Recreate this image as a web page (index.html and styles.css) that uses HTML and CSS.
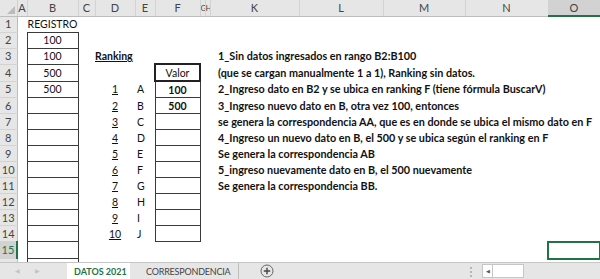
FILE: index.html
```html
<!DOCTYPE html>
<html lang="es">
<head>
  <meta charset="UTF-8">
  <meta name="viewport" content="width=device-width, initial-scale=1.0">
  <title>DATOS 2021</title>
  <link rel="stylesheet" href="styles.css">
</head>
<body>
  <div class="sheet-wrap">
  <table class="sheet">
    <colgroup>
      <col class="w-rh"><col class="w-a"><col class="w-b"><col class="w-c"><col class="w-d"><col class="w-e">
      <col class="w-f"><col class="w-g"><col class="w-h"><col class="w-k"><col class="w-l"><col class="w-m">
      <col class="w-n"><col class="w-o">
    </colgroup>
    <thead>
      <tr>
        <th class="corner"></th>
        <th class="col-head">A</th><th class="col-head">B</th><th class="col-head">C</th><th class="col-head">D</th>
        <th class="col-head">E</th><th class="col-head">F</th><th class="col-head narrow">G</th><th class="col-head narrow">H</th>
        <th class="col-head">K</th><th class="col-head">L</th><th class="col-head">M</th><th class="col-head">N</th>
        <th class="col-head current">O</th>
      </tr>
    </thead>
    <tbody>
      <tr>
        <th class="row-head">1</th><td></td><td class="center">REGISTRO</td><td></td><td></td><td></td><td></td><td></td><td></td>
        <td colspan="4"></td><td></td>
      </tr>
      <tr>
        <th class="row-head">2</th><td></td><td class="box center">100</td><td></td><td></td><td></td><td></td><td></td><td></td>
        <td colspan="4"></td><td></td>
      </tr>
      <tr>
        <th class="row-head">3</th><td></td><td class="box center">100</td><td></td><td class="title">Ranking</td><td></td><td></td><td></td><td></td>
        <td colspan="4" class="note">1_Sin datos ingresados en rango B2:B100</td><td></td>
      </tr>
      <tr>
        <th class="row-head">4</th><td></td><td class="box center">500</td><td></td><td></td><td></td><td class="box-head center">Valor</td><td></td><td></td>
        <td colspan="4" class="note">(que se cargan manualmente 1 a 1), Ranking sin datos.</td><td></td>
      </tr>
      <tr>
        <th class="row-head">5</th><td></td><td class="box center">500</td><td></td><td class="rank">1</td><td class="letter">A</td><td class="box center strong">100</td><td></td><td></td>
        <td colspan="4" class="note">2_Ingreso dato en B2 y se ubica en ranking F (tiene fórmula BuscarV)</td><td></td>
      </tr>
      <tr>
        <th class="row-head">6</th><td></td><td class="box"></td><td></td><td class="rank">2</td><td class="letter">B</td><td class="box center strong">500</td><td></td><td></td>
        <td colspan="4" class="note">3_Ingreso nuevo dato en B, otra vez 100, entonces</td><td></td>
      </tr>
      <tr>
        <th class="row-head">7</th><td></td><td class="box"></td><td></td><td class="rank">3</td><td class="letter">C</td><td class="box"></td><td></td><td></td>
        <td colspan="4" class="note">se genera la correspondencia AA, que es en donde se ubica el mismo dato en F</td><td></td>
      </tr>
      <tr>
        <th class="row-head">8</th><td></td><td class="box"></td><td></td><td class="rank">4</td><td class="letter">D</td><td class="box"></td><td></td><td></td>
        <td colspan="4" class="note">4_Ingreso un nuevo dato en B, el 500 y se ubica según el ranking en F</td><td></td>
      </tr>
      <tr>
        <th class="row-head">9</th><td></td><td class="box"></td><td></td><td class="rank">5</td><td class="letter">E</td><td class="box"></td><td></td><td></td>
        <td colspan="4" class="note">Se genera la correspondencia AB</td><td></td>
      </tr>
      <tr>
        <th class="row-head">10</th><td></td><td class="box"></td><td></td><td class="rank">6</td><td class="letter">F</td><td class="box"></td><td></td><td></td>
        <td colspan="4" class="note">5_ingreso nuevamente dato en B, el 500 nuevamente</td><td></td>
      </tr>
      <tr>
        <th class="row-head">11</th><td></td><td class="box"></td><td></td><td class="rank">7</td><td class="letter">G</td><td class="box"></td><td></td><td></td>
        <td colspan="4" class="note">Se genera la correspondencia BB.</td><td></td>
      </tr>
      <tr>
        <th class="row-head">12</th><td></td><td class="box"></td><td></td><td class="rank">8</td><td class="letter">H</td><td class="box"></td><td></td><td></td>
        <td colspan="4"></td><td></td>
      </tr>
      <tr>
        <th class="row-head">13</th><td></td><td class="box"></td><td></td><td class="rank">9</td><td class="letter">I</td><td class="box"></td><td></td><td></td>
        <td colspan="4"></td><td></td>
      </tr>
      <tr>
        <th class="row-head">14</th><td></td><td class="box"></td><td></td><td class="rank">10</td><td class="letter">J</td><td class="box"></td><td></td><td></td>
        <td colspan="4"></td><td></td>
      </tr>
      <tr>
        <th class="row-head current">15</th><td></td><td class="box"></td><td></td><td></td><td></td><td></td><td></td><td></td>
        <td colspan="4"></td><td class="active"></td>
      </tr>
      <tr>
        <th class="row-head">16</th><td></td><td class="box"></td><td></td><td></td><td></td><td></td><td></td><td></td>
        <td colspan="4"></td><td></td>
      </tr>
    </tbody>
  </table>
  </div>

  <div class="tabbar">
    <div class="tab-nav">
      <span class="nav-arrow">&#9664;</span>
      <span class="nav-arrow">&#9654;</span>
    </div>
    <div class="tab selected">DATOS 2021</div>
    <div class="tab">CORRESPONDENCIA</div>
    <div class="add-sheet">
      <svg width="14" height="14" viewBox="0 0 14 14">
        <circle cx="7" cy="7" r="6" fill="none" stroke="#666" stroke-width="1"/>
        <path d="M7 3.8v6.4M3.8 7h6.4" stroke="#444" stroke-width="1.4"/>
      </svg>
    </div>
    <div class="splitter"></div>
    <div class="hscroll">
      <span class="scroll-btn">&#9664;</span>
      <span class="scroll-thumb"></span>
    </div>
  </div>
</body>
</html>
```

FILE: styles.css
```css
body {
  margin: 0;
  width: 600px;
  height: 279px;
  overflow: hidden;
  background: #fff;
  font-family: Lato, "Liberation Sans", sans-serif;
  color: #111;
}

.sheet-wrap {
  height: 262px;
  overflow: hidden;
}

table.sheet {
  border-collapse: collapse;
  table-layout: fixed;
  width: 600px;
}

.w-rh { width: 17px; }
.w-a { width: 10px; }
.w-b { width: 51px; }
.w-c { width: 17px; }
.w-d { width: 40px; }
.w-e { width: 20px; }
.w-f { width: 45px; }
.w-g { width: 5px; }
.w-h { width: 5px; }
.w-k { width: 89px; }
.w-l { width: 84px; }
.w-m { width: 82px; }
.w-n { width: 83px; }
.w-o { width: 52px; }

tr {
  height: 16px;
}

th, td {
  padding: 0;
  height: 15px;
  white-space: nowrap;
  overflow: visible;
  font-size: 10.5px;
  line-height: 14px;
}

th.corner {
  position: relative;
  background: #e6e6e6;
  border-right: 1px solid #d0d0d0;
  border-bottom: 1px solid #bdbdbd;
}

th.corner::after {
  content: "";
  position: absolute;
  right: 2px;
  bottom: 2px;
  border-left: 8px solid transparent;
  border-bottom: 8px solid #bcbcbc;
}

th.col-head {
  background: #e6e6e6;
  color: #444;
  font-weight: normal;
  font-size: 11px;
  text-align: center;
  border-right: 1px solid #d3d3d3;
  border-bottom: 1px solid #bdbdbd;
}

th.col-head.narrow {
  overflow: hidden;
  text-align: left;
  font-size: 8px;
}

th.col-head.current {
  background: #d2d2d2;
  border-bottom: 2px solid #217346;
}

th.row-head {
  background: #e6e6e6;
  color: #444;
  font-weight: normal;
  font-size: 11px;
  text-align: center;
  border-right: 1px solid #bdbdbd;
  border-bottom: 1px solid #d3d3d3;
}

th.row-head.current {
  background: #d2d2d2;
  color: #217346;
  border-right: 2px solid #217346;
}

.center {
  text-align: center;
}

.box {
  border: 1px solid #3a3a3a;
}

.box-head {
  border: 2px solid #222;
}

.strong {
  font-weight: bold;
}

.title {
  font-weight: bold;
  text-decoration: underline;
}

.rank {
  text-align: center;
  text-decoration: underline;
}

.letter {
  padding-left: 2px;
}

.note {
  font-weight: bold;
  font-size: 10.8px;
  padding-left: 8px;
}

td.active {
  border: 2px solid #217346;
}

.tabbar {
  display: flex;
  align-items: stretch;
  height: 16px;
  background: #e6e6e6;
  border-top: 1px solid #c6c6c6;
  font-size: 9px;
  color: #444;
}

.tab-nav {
  display: flex;
  align-items: center;
  gap: 15px;
  width: 62px;
  padding-left: 15px;
  box-sizing: border-box;
}

.nav-arrow {
  font-size: 6px;
  line-height: 8px;
  color: #c4c4c4;
}

.tab {
  display: flex;
  align-items: center;
  flex: 0 0 auto;
  box-sizing: border-box;
  width: 109px;
  padding-left: 16px;
  letter-spacing: -0.2px;
  border-right: 1px solid #bdbdbd;
}

.tab.selected {
  width: 63px;
  margin-left: 5px;
  padding-left: 7px;
  background: #fff;
  color: #217346;
  font-weight: bold;
  letter-spacing: 0;
  border-right: none;
}

.add-sheet {
  display: flex;
  align-items: center;
  margin-left: 21px;
}

.splitter {
  width: 0;
  margin: 4px 0 2px 196px;
  border-left: 2px dotted #b5b5b5;
}

.hscroll {
  display: flex;
  align-items: center;
  margin-left: 10px;
  flex: 1;
}

.scroll-btn {
  display: flex;
  align-items: center;
  justify-content: center;
  width: 9px;
  height: 12px;
  background: #fff;
  border: 1px solid #c6c6c6;
  font-size: 5px;
  color: #555;
}

.scroll-thumb {
  width: 30px;
  height: 12px;
  background: #fff;
  border: 1px solid #c6c6c6;
  border-left: none;
}
```
